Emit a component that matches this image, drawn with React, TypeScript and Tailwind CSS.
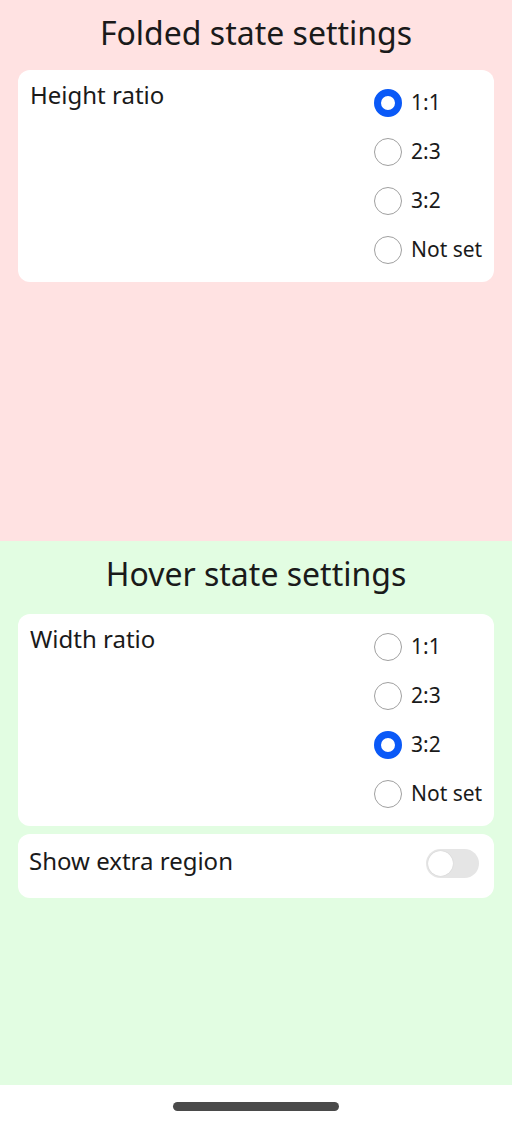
import React from "react";

const font = { fontFamily: '"Noto Sans", "Open Sans", sans-serif' };

function Radio({ checked, label }: { checked: boolean; label: string }) {
  return (
    <div className="flex h-[49px] items-center gap-[9px]">
      {checked ? (
        <div className="h-[28px] w-[28px] shrink-0 rounded-full border-[7px] border-[#0a59f7] bg-white" />
      ) : (
        <div className="h-[28px] w-[28px] shrink-0 rounded-full border-[1.5px] border-[#a0a0a0] bg-white" />
      )}
      <span className="whitespace-nowrap text-[21px] leading-none text-[#1a1a1a]">{label}</span>
    </div>
  );
}

function RatioCard({ title, selected }: { title: string; selected: string }) {
  const opts = ["1:1", "2:3", "3:2", "Not set"];
  return (
    <div className="mx-[18px] flex justify-between rounded-[12px] bg-white py-[8px] pl-[12px] pr-[6px]">
      <div className="pt-[1px] text-[24px] leading-[32px] text-[#1a1a1a]">{title}</div>
      <div className="flex w-[114px] flex-col">
        {opts.map((o) => (
          <Radio key={o} label={o} checked={o === selected} />
        ))}
      </div>
    </div>
  );
}

export default function App() {
  return (
    <div className="flex h-[1127px] w-[512px] flex-col" style={font}>
      <div className="h-[541px] bg-[#ffe2e2]">
        <div className="flex h-[66px] items-center justify-center text-[32px] text-[#1a1a1a]">
          Folded state settings
        </div>
        <div className="mt-[4px]">
          <RatioCard title="Height ratio" selected="1:1" />
        </div>
      </div>
      <div className="h-[544px] bg-[#e2fde2]">
        <div className="flex h-[66px] items-center justify-center text-[32px] text-[#1a1a1a]">
          Hover state settings
        </div>
        <div className="mt-[7px] flex flex-col gap-[8px]">
          <RatioCard title="Width ratio" selected="3:2" />
          <div className="mx-[18px] flex h-[64px] items-center justify-between rounded-[12px] bg-white pl-[11px] pr-[15px]">
            <span className="-mt-[10px] text-[24px] text-[#1a1a1a]">Show extra region</span>
            <div className="-mt-[6px] flex h-[29px] w-[53px] items-center rounded-full bg-[#e5e5e5] px-[2px]">
              <div className="h-[25px] w-[25px] rounded-full bg-white shadow-[0_0_1px_rgba(0,0,0,0.2)]" />
            </div>
          </div>
        </div>
      </div>
      <div className="flex flex-1 items-center justify-center bg-white">
        <div className="h-[9px] w-[166px] rounded-full bg-[#4a4a4a]" />
      </div>
    </div>
  );
}
